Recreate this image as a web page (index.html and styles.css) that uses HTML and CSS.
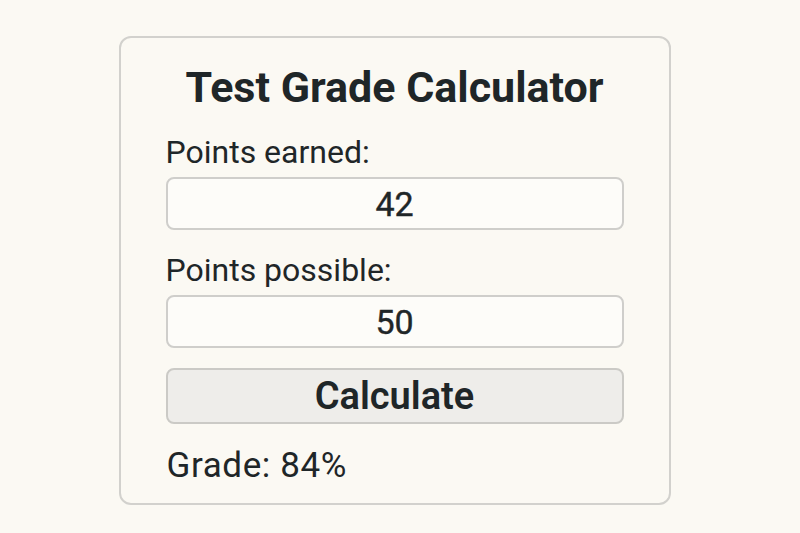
FILE: index.html
```html
<!DOCTYPE html>
<html lang="en">
<head>
<meta charset="utf-8">
<title>Test Grade Calculator</title>
<link rel="stylesheet" href="styles.css">
</head>
<body>
<main class="page">
  <section class="card">
    <h1 class="title">Test Grade Calculator</h1>
    <label class="label" for="earned">Points earned:</label>
    <input class="field" id="earned" type="text" value="42">
    <label class="label" for="possible">Points possible:</label>
    <input class="field" id="possible" type="text" value="50">
    <button class="calc" type="button">Calculate</button>
    <p class="result">Grade: 84%</p>
  </section>
</main>
</body>
</html>
```

FILE: styles.css
```css
html, body {
  margin: 0;
  padding: 0;
  background: #fbf9f3;
}

body {
  font-family: Roboto, "Liberation Sans", sans-serif;
  color: #1f2628;
}

.page {
  display: flex;
  justify-content: center;
  padding-top: 36px;
  padding-right: 11px;
}

.card {
  box-sizing: border-box;
  width: 552px;
  height: 469px;
  border: 2px solid #d2d1cd;
  border-radius: 12px;
  padding: 22px 45px 0;
  display: flex;
  flex-direction: column;
}

.title {
  margin: 0 0 20px;
  text-align: center;
  font-size: 43px;
  font-weight: 700;
  line-height: 54px;
}

.label {
  font-size: 32px;
  line-height: 36px;
  margin-bottom: 7px;
}

.field {
  box-sizing: border-box;
  height: 53px;
  border: 2px solid #cfcecb;
  border-radius: 8px;
  background: #fdfcf9;
  font: inherit;
  font-size: 34px;
  text-align: center;
  color: #1f2628;
  margin-bottom: 22px;
  padding: 0;
  -webkit-text-stroke: 0.4px #1f2628;
}

.calc {
  box-sizing: border-box;
  margin-top: -2px;
  height: 56px;
  border: 2px solid #cbcac6;
  border-radius: 8px;
  background: #eeedea;
  font: inherit;
  font-size: 38px;
  font-weight: 600;
  color: #1f2628;
}

.result {
  margin: 23px 0 0 1px;
  font-size: 35px;
  letter-spacing: 0.6px;
  line-height: 38px;
}
```
